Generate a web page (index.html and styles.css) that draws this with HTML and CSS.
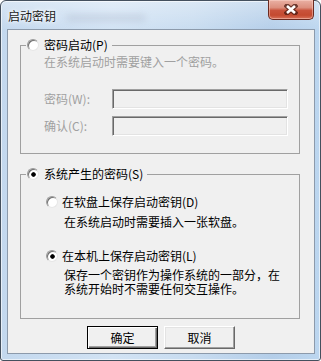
FILE: index.html
```html
<!DOCTYPE html>
<html lang="zh-CN">
<head>
<meta charset="utf-8">
<title>启动密钥</title>
<link rel="stylesheet" href="styles.css">
</head>
<body>
<div class="window">
  <div class="titlebar">
    <span class="title">启动密钥</span>
    <span class="smudge"></span>
    <span class="close">
      <svg width="14" height="11" viewBox="0 0 14 11">
        <path d="M3 2 L11 9 M11 2 L3 9" stroke="#4a1a12" stroke-opacity="0.75" stroke-width="5" stroke-linecap="square" fill="none"/>
        <path d="M3 2 L11 9 M11 2 L3 9" stroke="#ffffff" stroke-width="2.6" stroke-linecap="butt" fill="none"/>
      </svg>
    </span>
  </div>
  <div class="client">
    <fieldset class="group g1">
      <legend><span class="radio"></span>密码启动(P)</legend>
      <p class="desc disabled">在系统启动时需要键入一个密码。</p>
      <div class="field"><span class="label disabled">密码(W):</span><span class="edit"></span></div>
      <div class="field second"><span class="label disabled">确认(C):</span><span class="edit"></span></div>
    </fieldset>
    <fieldset class="group g2">
      <legend><span class="radio checked"></span>系统产生的密码(S)</legend>
      <div class="option first"><span class="radio"></span>在软盘上保存启动密钥(D)</div>
      <p class="sub">在系统启动时需要插入一张软盘。</p>
      <div class="option secondopt"><span class="radio checked"></span>在本机上保存启动密钥(L)</div>
      <p class="sub tight">保存一个密钥作为操作系统的一部分，在<br>系统开始时不需要任何交互操作。</p>
    </fieldset>
    <div class="buttons">
      <span class="btn default">确定</span>
      <span class="btn">取消</span>
    </div>
  </div>
</div>
</body>
</html>
```
FILE: styles.css
```css
* { box-sizing: border-box; }
html, body { margin: 0; padding: 0; background: #ffffff; }
body {
  font-family: "Noto Sans CJK SC", "Noto Sans", sans-serif;
  font-size: 12px;
  line-height: 14px;
  color: #000;
}
.window {
  width: 321px;
  height: 361px;
  border: 1px solid #44505e;
  border-radius: 6px 6px 3px 3px;
  padding: 0 5px 6px 6px;
  background:
    linear-gradient(to bottom, rgba(255,255,255,0.35), rgba(255,255,255,0) 30px),
    linear-gradient(to right, #c3d8ee 0%, #d2e3f4 35%, #c8dcf0 60%, #b4cee9 85%, #bcd6ef 100%);
  box-shadow: inset 0 0 0 1px rgba(255,255,255,0.6);
  display: flex;
  flex-direction: column;
}
.titlebar {
  height: 28px;
  flex: none;
  display: flex;
  align-items: center;
}
.title {
  margin-left: 1px;
  margin-top: 2px;
  font-size: 12px;
  color: #1a1a1a;
  text-shadow: 0 0 6px #ffffff, 0 0 3px #ffffff;
}
.smudge {
  width: 80px;
  height: 8px;
  margin-left: 10px;
  margin-top: 6px;
  background: rgba(150,160,180,0.22);
  filter: blur(3px);
  border-radius: 4px;
}
.close {
  margin-left: auto;
  margin-right: 1px;
  margin-top: -1px;
  align-self: flex-start;
  width: 46px;
  height: 20px;
  border: 1px solid #6b2a20;
  border-top: none;
  border-radius: 0 0 5px 5px;
  background: linear-gradient(to bottom, #eab1a4 0%, #dc8f7e 40%, #c9533c 55%, #c44a30 80%, #d8725a 100%);
  box-shadow: inset 0 0 0 1px rgba(255,220,210,0.45);
  display: flex;
  align-items: center;
  justify-content: center;
}
.client {
  height: 325px;
  flex: none;
  background: #f0f0f0;
  border: 1px solid #8c9aab;
  padding: 8px 0 0 12px;
}
.group {
  width: 280px;
  margin: 0;
  padding: 0;
  border: 1px solid #a0a0a0;
  min-inline-size: 0;
}
.group legend {
  margin-left: 5px;
  padding: 0 4px 0 1px;
  display: flex;
  align-items: center;
  height: 14px;
  line-height: 14px;
}
.radio {
  flex: none;
  display: inline-block;
  width: 12px;
  height: 12px;
  border-radius: 50%;
  border: 1px solid;
  border-color: #9a9a9a #e6e6e6 #e6e6e6 #9a9a9a;
  background: #ffffff;
  box-shadow: inset 1px 1px 0 #707070;
  margin-right: 5px;
}
.radio.checked {
  background: radial-gradient(circle at 55% 55%, #000 0, #000 1.9px, #ffffff 2.6px);
}
.disabled { color: #a0a0a0; }
p { margin: 0; }
.g1 .desc { margin: 3px 0 0 23px; }
.field {
  display: flex;
  align-items: center;
  height: 20px;
  margin: 20px 0 0 23px;
}
.field.second { margin-top: 7px; }
.field .label { width: 68px; }
.edit {
  width: 176px;
  height: 20px;
  border: 1px solid;
  border-color: #a0a0a0 #ffffff #ffffff #a0a0a0;
  box-shadow: inset 1px 1px 0 #696969, inset -1px -1px 0 #e3e3e3;
  background: #f0f0f0;
}
.g1 { padding-bottom: 17px; }
.g2 { margin-top: 13px; padding-bottom: 22px; }
.option {
  display: flex;
  align-items: center;
  height: 14px;
  margin-left: 25px;
}
.option .radio { margin-right: 4px; }
.option.first { margin-top: 14px; }
.option.secondopt { margin-top: 20px; }
.sub { margin: 6px 0 0 43px; }
.sub.tight { margin-top: 5px; line-height: 14px; }
.buttons {
  display: flex;
  justify-content: center;
  gap: 6px;
  margin-top: 7px;
  padding-right: 12px;
}
.btn {
  width: 71px;
  height: 23px;
  display: flex;
  align-items: center;
  justify-content: center;
  background: #f0f0f0;
  border: 1px solid;
  border-color: #ffffff #696969 #696969 #ffffff;
  box-shadow: inset -1px -1px 0 #a0a0a0, inset 1px 1px 0 #e3e3e3;
}
.btn.default {
  border-color: #000;
  box-shadow: inset 1px 1px 0 #ffffff, inset -1px -1px 0 #696969, inset -2px -2px 0 #a0a0a0;
}
```
